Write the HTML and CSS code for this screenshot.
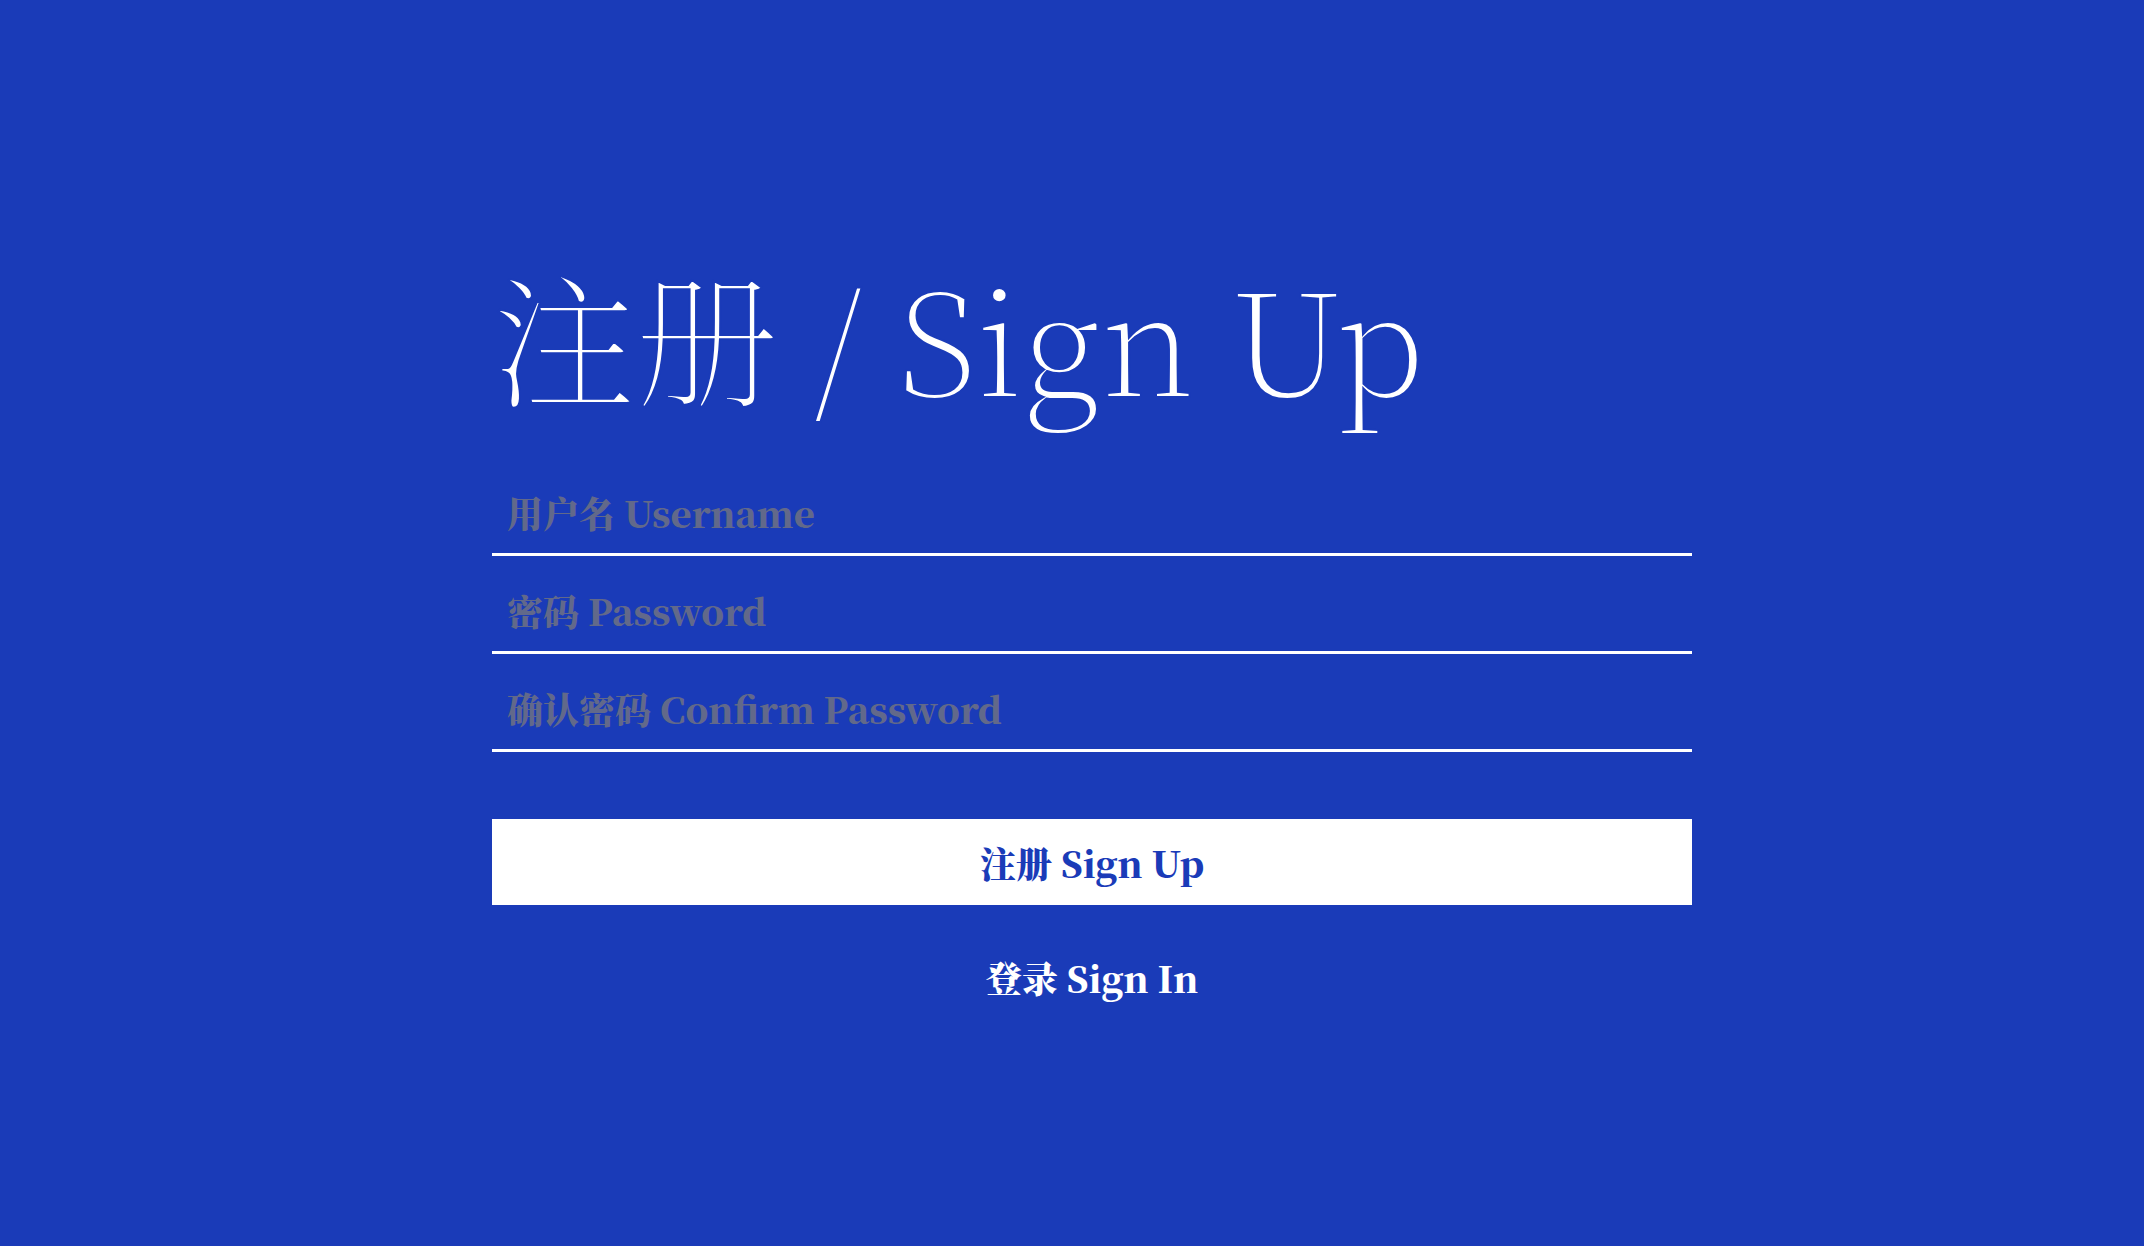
FILE: index.html
```html
<!DOCTYPE html>
<html lang="zh-CN">
<head>
<meta charset="utf-8">
<title>注册 / Sign Up</title>
<link rel="stylesheet" href="styles.css">
</head>
<body>
<main class="page">
  <form class="signup">
    <h1 class="title">注册 / Sign Up</h1>
    <input class="field" type="text" placeholder="用户名 Username">
    <input class="field" type="password" placeholder="密码 Password">
    <input class="field" type="password" placeholder="确认密码 Confirm Password">
    <button class="submit" type="button">注册 Sign Up</button>
    <a class="switch" href="#">登录 Sign In</a>
  </form>
</main>
</body>
</html>
```

FILE: styles.css
```css
html, body {
  margin: 0;
  padding: 0;
}

body {
  background: #1a3bb8;
  min-height: 100vh;
  font-family: "Noto Serif CJK SC", "Noto Serif SC", "Source Han Serif SC", "DejaVu Serif", serif;
  color: #ffffff;
}

.page {
  display: flex;
  justify-content: center;
  padding-top: 227px;
  padding-left: 40px;
}

.signup {
  width: 1200px;
  padding: 0 20px;
  display: flex;
  flex-direction: column;
}

.title {
  margin: 0 0 15px 0;
  font-size: 144px;
  font-weight: 200;
  line-height: 216px;
  letter-spacing: -1px;
  color: #ffffff;
  -webkit-text-stroke: 2px #1a3bb8;
}

.field {
  display: block;
  box-sizing: border-box;
  width: 100%;
  height: 98px;
  margin: 0;
  padding: 13px 15px 0 15px;
  background: transparent;
  border: none;
  border-bottom: 3px solid #ffffff;
  outline: none;
  font-family: inherit;
  font-size: 36px;
  font-weight: 900;
  color: #ffffff;
}

.field::placeholder {
  color: #62698a;
  opacity: 1;
}

.submit {
  display: block;
  width: 100%;
  height: 86px;
  margin-top: 67px;
  border: none;
  background: #ffffff;
  color: #1a3bb8;
  font-family: inherit;
  font-size: 36px;
  font-weight: 900;
  cursor: pointer;
}

.switch {
  display: block;
  margin-top: 47px;
  text-align: center;
  color: #ffffff;
  text-decoration: none;
  font-size: 36px;
  font-weight: 900;
}
```
